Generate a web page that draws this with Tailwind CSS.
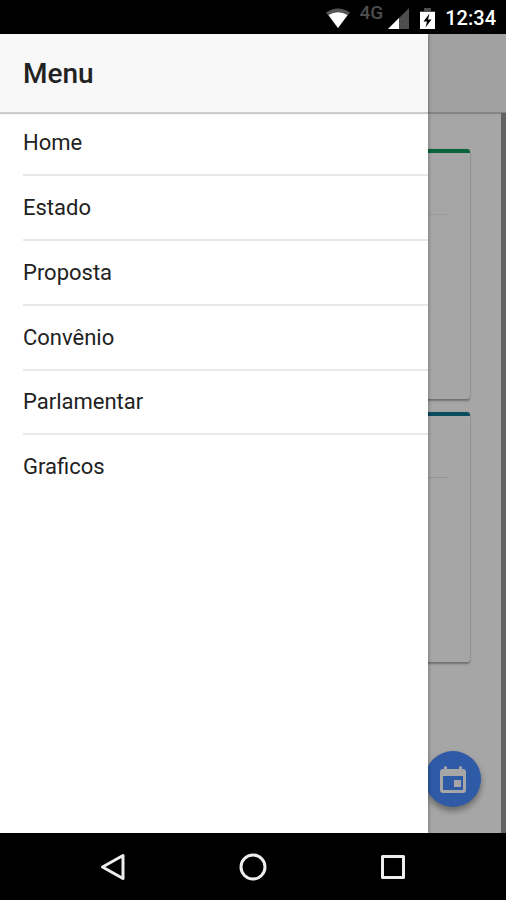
<!DOCTYPE html>
<html lang="pt-BR">
<head>
<meta charset="utf-8">
<meta name="viewport" content="width=device-width, initial-scale=1">
<title>Menu</title>
<script src="https://cdn.jsdelivr.net/npm/@tailwindcss/browser@4"></script>
</head>
<body class="flex h-screen flex-col overflow-hidden bg-black font-['Roboto',sans-serif] text-[#222]">
  <!-- Status bar -->
  <div class="flex h-[34px] shrink-0 items-center justify-end pt-[2px] pr-[10px] text-white">
    <svg class="h-[20px] w-[24px]" viewBox="0 0 24 20" aria-hidden="true">
      <path d="M0 4.500Q12-3.500 24 4.500L12 20Z" fill="#555"/>
      <path d="M2.500 7Q12 1.500 21.500 7L12 20Z" fill="#fff"/>
    </svg>
    <span class="ml-[10px] mb-[10px] text-[19px] leading-5 font-medium text-[#4d4d4d]">4G</span>
    <svg class="ml-[5px] h-[21px] w-[21px]" viewBox="0 0 21 21" aria-hidden="true">
      <path d="M21 0V21H0Z" fill="#4d4d4d"/>
      <path d="M11 10V21H0Z" fill="#fff"/>
    </svg>
    <svg class="ml-[11px] h-[21px] w-[15px]" viewBox="0 0 15 21" aria-hidden="true">
      <path d="M4 0h7v3h4v2H0V3h4z" fill="#4d4d4d"/>
      <path d="M0 4h15v17H0z" fill="#fff"/>
      <path d="M9.500 5.500L3.500 13.500H7L5.500 19.500L11.500 11.500H8Z" fill="#000"/>
    </svg>
    <time class="ml-[10px] text-[20px] leading-6 font-medium">12:34</time>
  </div>

  <div class="relative min-h-0 flex-1 overflow-hidden bg-white">
    <!-- Page under the menu -->
    <main class="flex h-full flex-col" inert>
      <header class="h-[78px] shrink-0 bg-[#f8f8f8] shadow-[0_2px_1px_#00000033]"></header>
      <div class="mt-px flex flex-1 flex-col gap-[13px] border-r-[5px] border-[#999] pt-[36px] pr-[31px] pl-[36px]">
        <section class="h-[250px] rounded-[3px] border-t-4 border-[#089d59] pt-[61px] pr-[22px] shadow-[0_2px_2px_#00000050,0_0_2px_#00000020]">
          <hr class="border-[#eee]">
        </section>
        <section class="h-[250px] rounded-[3px] border-t-4 border-[#0f7392] pt-[61px] pr-[22px] shadow-[0_2px_2px_#00000050,0_0_2px_#00000020]">
          <hr class="border-[#e4e4e4]">
        </section>
      </div>
      <button type="button" aria-label="Calendário" class="absolute right-[25px] bottom-[26px] flex size-[56px] items-center justify-center rounded-full bg-[#488aff] text-white shadow-[0_4px_6px_#00000060]">
        <svg class="h-[27px] w-[26px]" viewBox="0 0 26 27" fill="none" aria-hidden="true">
          <path fill-rule="evenodd" d="M4 1.500Q4 0 5.500 0T7 1.500V3H19V1.500Q19 0 20.500 0T22 1.500V3h1a3 3 0 0 1 3 3v18a3 3 0 0 1-3 3H3a3 3 0 0 1-3-3V6a3 3 0 0 1 3-3h1zM3 10v14h20V10z" fill="currentColor"/>
          <path d="M14 14h7v7h-7z" fill="currentColor"/>
        </svg>
      </button>
    </main>

    <div class="absolute inset-0 bg-black/35"></div>

    <!-- Side menu -->
    <aside class="absolute inset-y-0 left-0 w-[428px] max-w-full bg-white shadow-[0_0_4px_#00000060]">
      <header class="relative flex h-[78px] items-center bg-[#f8f8f8] px-[23px] pt-[2px] shadow-[0_2px_1px_#00000033]">
        <h1 class="text-[28px] leading-8 font-medium">Menu</h1>
      </header>
      <nav aria-label="Menu">
        <ul class="pl-[23px] text-[22px] leading-7">
          <li class="h-[64px] border-b-2 border-[#e8e8e8]"><a href="#home" class="flex h-full items-center">Home</a></li>
          <li class="h-[65px] border-b-2 border-[#e8e8e8]"><a href="#estado" class="flex h-full items-center">Estado</a></li>
          <li class="h-[65px] border-b-2 border-[#e8e8e8]"><a href="#proposta" class="flex h-full items-center">Proposta</a></li>
          <li class="h-[65px] border-b-2 border-[#e8e8e8]"><a href="#convenio" class="flex h-full items-center">Convênio</a></li>
          <li class="h-[64px] border-b-2 border-[#e8e8e8]"><a href="#parlamentar" class="flex h-full items-center">Parlamentar</a></li>
          <li class="h-[64px]"><a href="#graficos" class="flex h-full items-center">Graficos</a></li>
        </ul>
      </nav>
    </aside>
  </div>

  <!-- System navigation -->
  <div class="flex h-[67px] shrink-0 items-center justify-center gap-[112px] text-[#eee]">
    <button type="button" aria-label="Voltar">
      <svg class="block size-7" viewBox="0 0 28 28" fill="none" stroke="currentColor" stroke-width="3" stroke-linejoin="round" aria-hidden="true"><path d="M24 2.500V25.500L3.500 14Z"/></svg>
    </button>
    <button type="button" aria-label="Início">
      <svg class="block size-7" viewBox="0 0 28 28" fill="none" stroke="currentColor" stroke-width="3" aria-hidden="true"><circle cx="14" cy="14" r="12"/></svg>
    </button>
    <button type="button" aria-label="Recentes">
      <svg class="block size-7" viewBox="0 0 28 28" fill="none" stroke="currentColor" stroke-width="3" stroke-linejoin="round" aria-hidden="true"><path d="M3.500 3.500h21v21h-21z"/></svg>
    </button>
  </div>
</body>
</html>
